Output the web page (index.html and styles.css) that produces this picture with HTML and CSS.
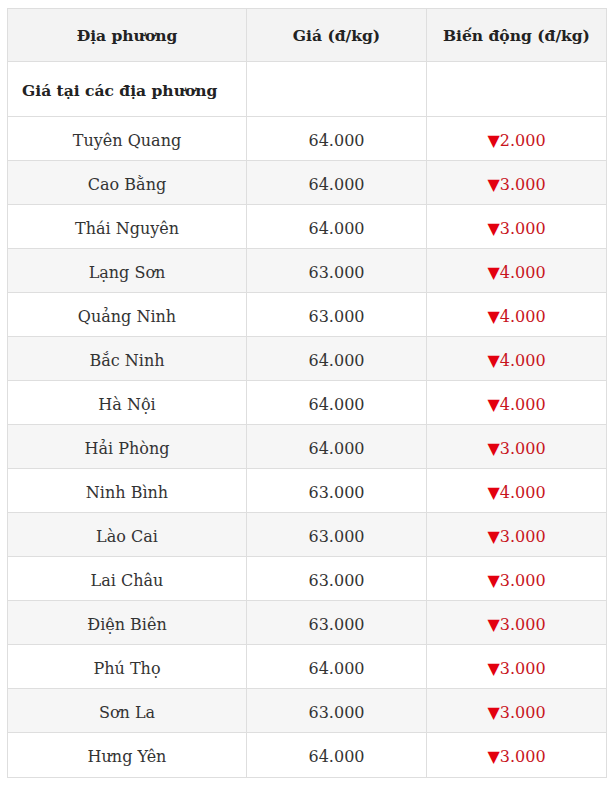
FILE: index.html
```html
<!DOCTYPE html>
<html lang="vi">
<head>
<meta charset="utf-8">
<title>Giá heo hơi</title>
<link rel="stylesheet" href="styles.css">
</head>
<body>
<table class="price-table">
  <colgroup>
    <col class="col-place">
    <col class="col-price">
    <col class="col-change">
  </colgroup>
  <thead>
    <tr>
      <th>Địa phương</th>
      <th>Giá (đ/kg)</th>
      <th>Biến động (đ/kg)</th>
    </tr>
  </thead>
  <tbody>
    <tr class="section">
      <td class="section-title">Giá tại các địa phương</td>
      <td></td>
      <td></td>
    </tr>
    <tr><td>Tuyên Quang</td><td>64.000</td><td class="down"><span class="tri">▼</span>2.000</td></tr>
    <tr class="alt"><td>Cao Bằng</td><td>64.000</td><td class="down"><span class="tri">▼</span>3.000</td></tr>
    <tr><td>Thái Nguyên</td><td>64.000</td><td class="down"><span class="tri">▼</span>3.000</td></tr>
    <tr class="alt"><td>Lạng Sơn</td><td>63.000</td><td class="down"><span class="tri">▼</span>4.000</td></tr>
    <tr><td>Quảng Ninh</td><td>63.000</td><td class="down"><span class="tri">▼</span>4.000</td></tr>
    <tr class="alt"><td>Bắc Ninh</td><td>64.000</td><td class="down"><span class="tri">▼</span>4.000</td></tr>
    <tr><td>Hà Nội</td><td>64.000</td><td class="down"><span class="tri">▼</span>4.000</td></tr>
    <tr class="alt"><td>Hải Phòng</td><td>64.000</td><td class="down"><span class="tri">▼</span>3.000</td></tr>
    <tr><td>Ninh Bình</td><td>63.000</td><td class="down"><span class="tri">▼</span>4.000</td></tr>
    <tr class="alt"><td>Lào Cai</td><td>63.000</td><td class="down"><span class="tri">▼</span>3.000</td></tr>
    <tr><td>Lai Châu</td><td>63.000</td><td class="down"><span class="tri">▼</span>3.000</td></tr>
    <tr class="alt"><td>Điện Biên</td><td>63.000</td><td class="down"><span class="tri">▼</span>3.000</td></tr>
    <tr><td>Phú Thọ</td><td>64.000</td><td class="down"><span class="tri">▼</span>3.000</td></tr>
    <tr class="alt"><td>Sơn La</td><td>63.000</td><td class="down"><span class="tri">▼</span>3.000</td></tr>
    <tr><td>Hưng Yên</td><td>64.000</td><td class="down"><span class="tri">▼</span>3.000</td></tr>
  </tbody>
</table>
</body>
</html>
```

FILE: styles.css
```css
html, body {
  background: #ffffff;
}
body {
  margin: 8px 0 0 7px;
  font-family: "DejaVu Serif", "Liberation Serif", serif;
  color: #333333;
}
.price-table {
  width: 599px;
  border-collapse: collapse;
  table-layout: fixed;
  font-size: 16px;
}
.col-place { width: 239px; }
.col-price { width: 180px; }
.col-change { width: 180px; }
.price-table th,
.price-table td {
  border: 1px solid #dedede;
  text-align: center;
  padding: 0 8px;
}
.price-table th {
  height: 52px;
  background: #f3f3f3;
  color: #222222;
  font-weight: bold;
  font-size: 15.5px;
}
.price-table tbody td {
  height: 40px;
  padding-top: 3px;
}
.price-table tr.section td {
  height: 51px;
}
.price-table tr:last-child td {
  height: 41px;
}
.price-table td.section-title {
  text-align: left;
  padding-left: 14px;
  font-weight: bold;
  font-size: 15.5px;
  color: #222222;
}
.price-table tr.alt td {
  background: #f6f6f6;
}
.down {
  color: #c8141c;
}
.tri {
  color: #e3000f;
}
```
